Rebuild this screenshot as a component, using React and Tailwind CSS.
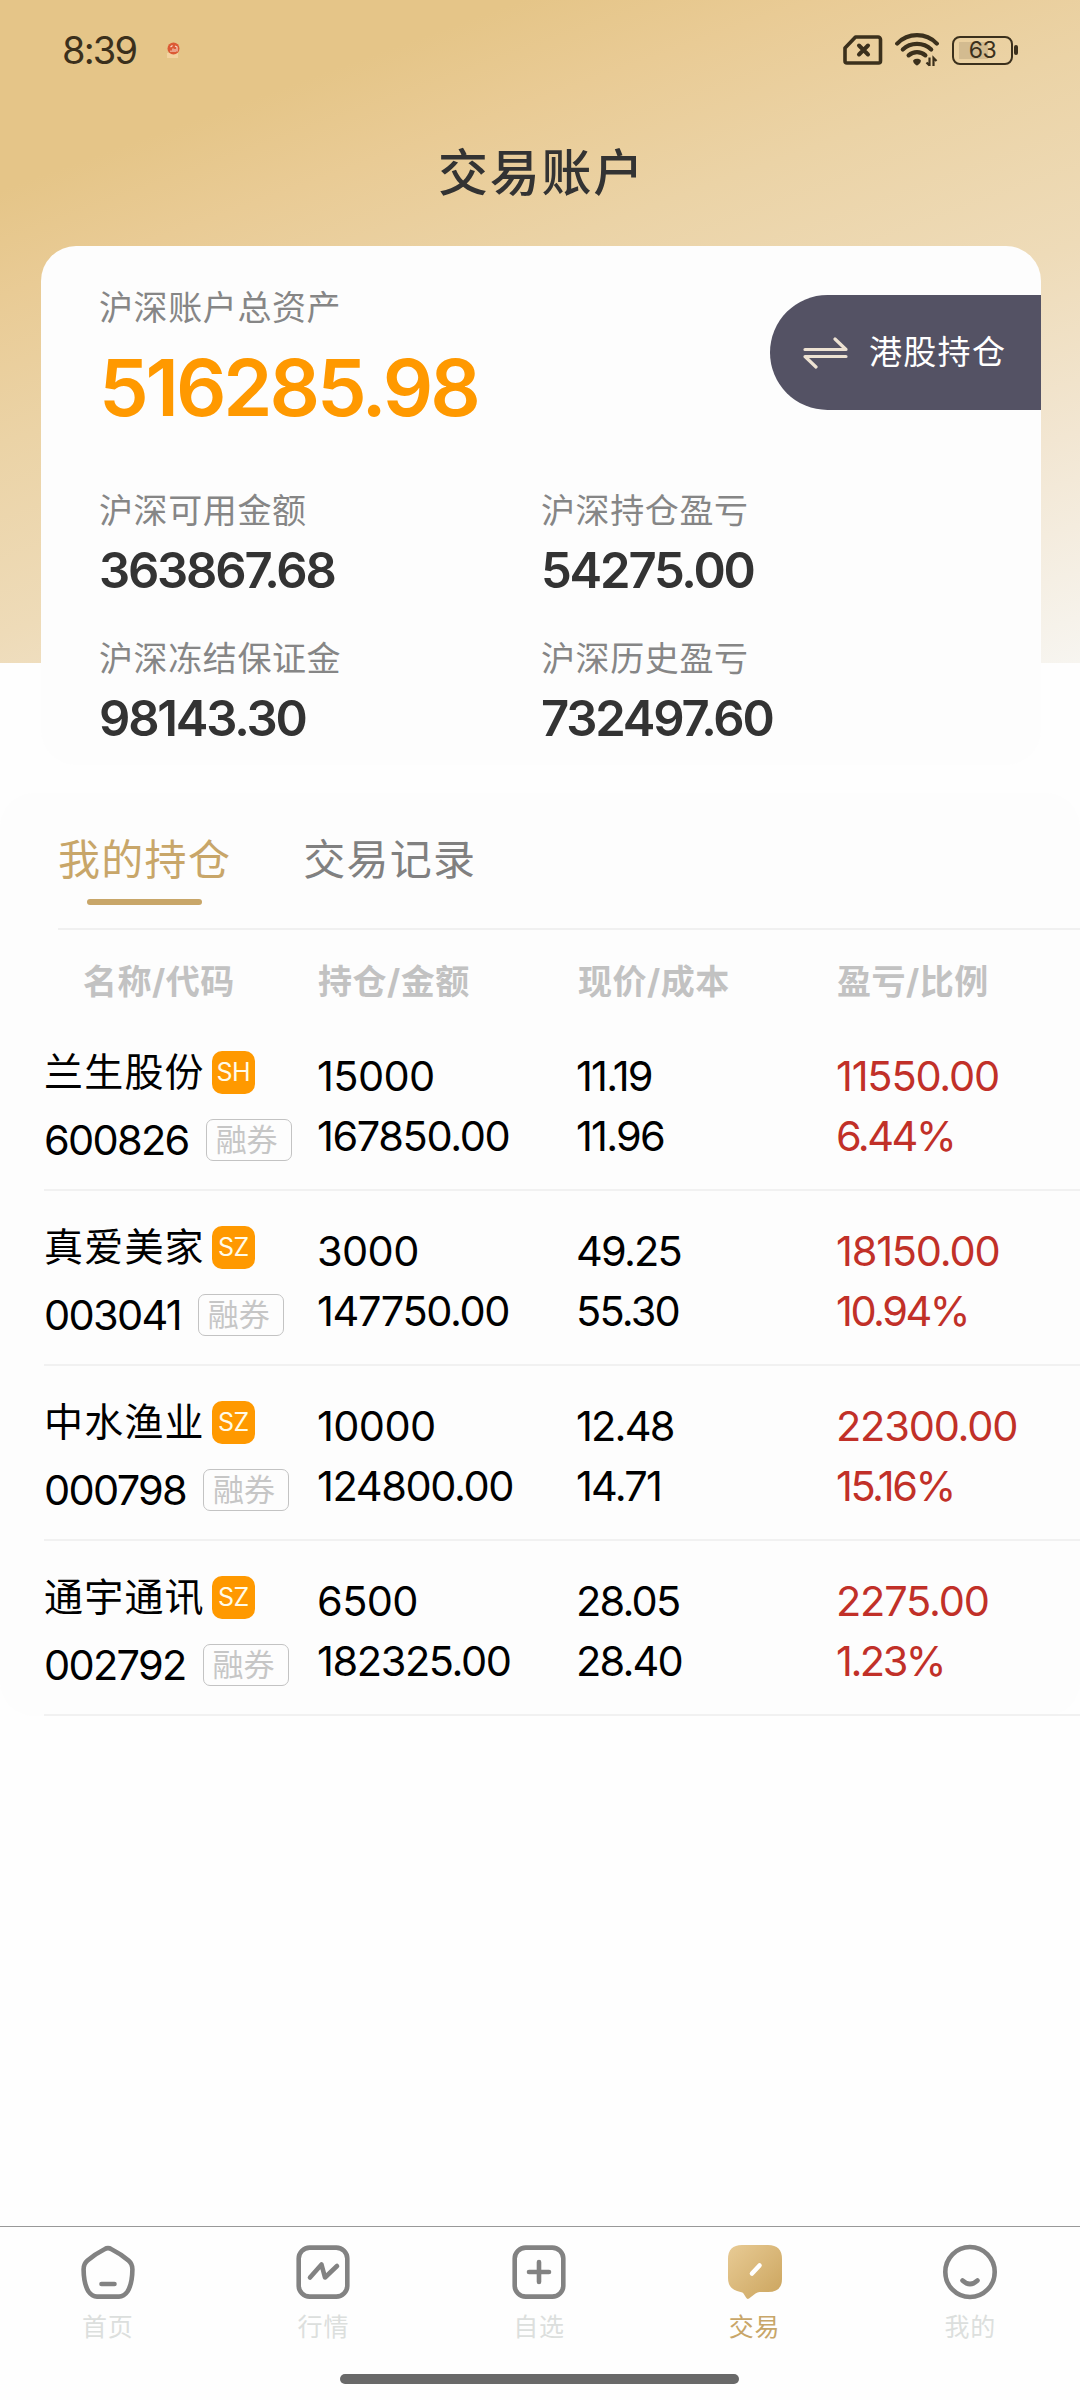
import { useState } from "react";

const balances = [
  { label: "沪深可用金额", value: "363867.68" },
  { label: "沪深持仓盈亏", value: "54275.00" },
  { label: "沪深冻结保证金", value: "98143.30" },
  { label: "沪深历史盈亏", value: "732497.60" },
];

const tabs = ["我的持仓", "交易记录"];

const columns = ["持仓/金额", "现价/成本", "盈亏/比例"];

const holdings = [
  {
    name: "兰生股份",
    market: "SH",
    code: "600826",
    quantity: "15000",
    amount: "167850.00",
    price: "11.19",
    cost: "11.96",
    profit: "11550.00",
    ratio: "6.44%",
  },
  {
    name: "真爱美家",
    market: "SZ",
    code: "003041",
    quantity: "3000",
    amount: "147750.00",
    price: "49.25",
    cost: "55.30",
    profit: "18150.00",
    ratio: "10.94%",
  },
  {
    name: "中水渔业",
    market: "SZ",
    code: "000798",
    quantity: "10000",
    amount: "124800.00",
    price: "12.48",
    cost: "14.71",
    profit: "22300.00",
    ratio: "15.16%",
  },
  {
    name: "通宇通讯",
    market: "SZ",
    code: "002792",
    quantity: "6500",
    amount: "182325.00",
    price: "28.05",
    cost: "28.40",
    profit: "2275.00",
    ratio: "1.23%",
  },
];

const StatusBar = () => (
  <div className="flex h-[100px] items-center pl-[62px] pr-[62px] text-[#3b301c]">
    <span className="w-[76px] text-[38px] leading-[100px] tracking-[-1.8px]">8:39</span>
    <svg width="14" height="16" viewBox="0 0 14 16" className="ml-[29px]">
      <rect x="0" y="11" width="11" height="5" fill="#f3d3a0" />
      <circle cx="6.5" cy="6.5" r="6" fill="#dc5a35" />
      <path d="M3.5 5l2-1.5M4 8.5V10M6 6.5v3.5M8 4l2 1v4.5M8 7v3" stroke="#f8ddcc" strokeWidth="1.1" fill="none" />
    </svg>
    <svg width="40" height="30" viewBox="0 0 40 30" className="ml-auto" fill="none" stroke="currentColor">
      <path
        d="M12.5 2H35a2.5 2.5 0 0 1 2.5 2.5V26a2 2 0 0 1-2 2H4a2 2 0 0 1-2-2V13z"
        strokeWidth="3.6"
        strokeLinejoin="round"
      />
      <path d="M16 10.5l9 9M25 10.5l-9 9" strokeWidth="4" strokeLinecap="round" />
    </svg>
    <svg width="44" height="34" viewBox="0 0 44 34" className="ml-[12px]" fill="none" stroke="currentColor">
      <path d="M2.2 10.6C13 -0.6 31 -0.6 41.8 10.6" strokeWidth="4.2" strokeLinecap="round" />
      <path d="M7.8 16.6C15.5 9 28.5 9 36.2 16.6" strokeWidth="4.2" strokeLinecap="round" />
      <path d="M13.6 22.3C18.5 18 25.5 18 30.4 22.3" strokeWidth="4.2" strokeLinecap="round" />
      <path d="M18.2 27.2c2.2-1.8 5.4-1.8 7.6 0 .4 2.2-2 4.6-3.8 5.2-1.8-.6-4.2-3-3.8-5.2z" fill="currentColor" stroke="none" />
      <path d="M34.5 24.5V33M31.500 29.5l3 3M38.5 33v-8l3 3" strokeWidth="2.2" />
    </svg>
    <div className="ml-[13px] flex h-[29px] w-[61px] items-center justify-center rounded-[8px] border-[2.5px] border-[#3b301c] bg-[linear-gradient(#d3bb90,#d3bb90)] bg-[length:29px_17px] bg-[position:5px_4px] bg-no-repeat text-[23px] leading-none tracking-[-0.5px]">
      63
    </div>
    <div className="ml-[1px] h-[10px] w-[4px] rounded-[2px] bg-[#3b301c]" />
  </div>
);

const AccountCard = () => (
  <div className="ml-[41px] h-[519px] w-[1000px] rounded-[35px] bg-[#fdfdfd] pt-[41px]">
    <div className="flex h-[178px] justify-between pl-[58px]">
      <div>
        <p className="text-[34px] leading-[42px] tracking-[0.6px] text-[#868686]">
          沪深账户总资产
        </p>
        <p className="text-[79px] leading-[117px] font-semibold tracking-[-3.1px] text-[#ff9900]">
          516285.98
        </p>
      </div>
      <button className="mt-[8px] flex h-[115px] w-[271px] items-center rounded-l-full bg-[#545264] pl-[33px] text-[33px] tracking-[1.3px] text-white">
        <svg
          width="45"
          height="32"
          viewBox="0 0 45 32"
          className="mr-[21px]"
          fill="none"
          stroke="#ede2d2"
          strokeWidth="3.2"
          strokeLinecap="round"
          strokeLinejoin="round"
        >
          <path d="M2 12.5h41L32 2M43 19.5H2L13 30" />
        </svg>
        港股持仓
      </button>
    </div>
    <div className="mt-[24px] grid grid-cols-[442px_1fr] gap-y-[29px] pl-[58px]">
      {balances.map((item) => (
        <div key={item.label}>
          <p className="text-[34px] leading-[44px] tracking-[0.6px] text-[#868686]">
            {item.label}
          </p>
          <p className="text-[49px] leading-[75px] font-semibold tracking-[-2.2px] text-[#333333]">
            {item.value}
          </p>
        </div>
      ))}
    </div>
  </div>
);

const HoldingRow = ({ stock }) => (
  <div className="ml-[44px] grid h-[175px] grid-cols-[273px_259px_260px_1fr] border-b-2 border-[#f1f1f1] text-[41.5px] leading-[60px] text-black">
    <div className="pt-[34px]">
      <div className="flex h-[44px] items-center">
        <span className="text-[39px] tracking-[1.2px]">{stock.name}</span>
        <span className="ml-[7px] flex h-[43px] w-[43px] items-center justify-center rounded-[10px] bg-[#ff9900] text-[25px] leading-none tracking-[-0.5px] text-[#fffbe8]">
          {stock.market}
        </span>
      </div>
      <div className="mt-[24px] flex h-[43px] items-center">
        <span className="tracking-[-1.7px]">{stock.code}</span>
        <span className="ml-[17px] h-[42px] w-[86px] rounded-[7px] border border-[#c3c3c3] pl-[9px] text-[31px] leading-[40px] text-[#c6c6c6]">
          融券
        </span>
      </div>
    </div>
    <div className="pt-[30px]">
      <p className="tracking-[-0.6px]">{stock.quantity}</p>
      <p className="tracking-[-1.4px]">{stock.amount}</p>
    </div>
    <div className="pt-[30px] tracking-[-1.8px]">
      <p>{stock.price}</p>
      <p>{stock.cost}</p>
    </div>
    <div className="pt-[30px] text-[#c13028]">
      <p className="tracking-[-1.2px]">{stock.profit}</p>
      <p className="tracking-[-2.5px]">{stock.ratio}</p>
    </div>
  </div>
);

const Holdings = () => {
  const [activeTab, setActiveTab] = useState(0);
  return (
    <section className="mt-[28px] h-[923px] rounded-[34px] bg-[#fdfdfd]">
      <div className="ml-[58px] flex h-[137px] gap-[72px] border-b-2 border-[#f0f0f0] pt-[37px]">
        {tabs.map((tab, index) => (
          <button
            key={tab}
            onClick={() => setActiveTab(index)}
            className={`flex flex-col items-center self-start text-[42px] leading-[60px] tracking-[1.3px] ${
              activeTab === index ? "text-[#c8a669]" : "text-[#808080]"
            }`}
          >
            {tab}
            {activeTab === index && (
              <span className="mt-[9px] h-[6px] w-[115px] rounded-full bg-[#c8a669]" />
            )}
          </button>
        ))}
      </div>
      <div className="ml-[45px] grid h-[86px] grid-cols-[273px_260px_259px_1fr] text-[34px] leading-[104px] font-bold tracking-[0.5px] text-[#c2c2c2]">
        <span className="pl-[38px]">名称/代码</span>
        {columns.map((column) => (
          <span key={column}>{column}</span>
        ))}
      </div>
      {holdings.map((stock) => (
        <HoldingRow key={stock.code} stock={stock} />
      ))}
    </section>
  );
};

const HomeIcon = () => (
  <>
    <path d="M23.5 4.2a7 7 0 0 1 7 0C37 7.5 43 11.5 47.5 15.5q4 3.5 3.9 9C51.3 33 50 41 46.5 46.5Q43 51.6 38 51.6H16Q11 51.6 7.5 46.5C4 41 2.7 33 2.6 24.5q-.1-5.5 3.9-9C11 11.5 17 7.5 23.5 4.2z" />
    <path d="M20.5 39H33.5" />
  </>
);

const MarketIcon = () => (
  <>
    <rect x="2.7" y="2.6" width="48.6" height="49" rx="11" />
    <path d="M14 32.5L25.5 19.5L29 32.5L41 21" />
  </>
);

const WatchIcon = () => (
  <>
    <rect x="2.7" y="2.6" width="48.6" height="49" rx="11" />
    <path d="M17 27H37M27 17V37" />
  </>
);

const TradeIcon = () => (
  <>
    <defs>
      <linearGradient id="trade" x1="0" y1="0" x2="1" y2="1">
        <stop offset="0" stopColor="#e8cb95" />
        <stop offset="1" stopColor="#cba45d" />
      </linearGradient>
    </defs>
    <path
      d="M14 0H40Q54 0 54 14V34Q54 47 40 47H31.5Q29.5 47 27.5 48.5L21 53.5Q19.3 54.8 18 52.5L15.5 48.5Q14.8 47.3 12.5 46.9Q0 45 0 33V14Q0 0 14 0z"
      fill="url(#trade)"
      stroke="none"
    />
    <path d="M24 28.5L31.5 20.5" stroke="#fff" />
  </>
);

const MineIcon = () => (
  <>
    <ellipse cx="27" cy="27" rx="24.7" ry="25" />
    <path d="M19.5 35.5Q27 42.5 34.5 35.5" />
  </>
);

const navItems = [
  { label: "首页", icon: HomeIcon },
  { label: "行情", icon: MarketIcon },
  { label: "自选", icon: WatchIcon },
  { label: "交易", icon: TradeIcon, active: true },
  { label: "我的", icon: MineIcon },
];

const BottomNav = () => (
  <nav className="mt-auto h-[174px] border-t border-[#999999] bg-[#fefefe]">
    <div className="grid h-[147px] grid-cols-5 pt-[18px] pr-[2px]">
      {navItems.map(({ label, icon: Icon, active }) => (
        <div
          key={label}
          className={`flex flex-col items-center text-[25px] leading-[30px] tracking-[0.8px] ${
            active ? "text-[#c8a669]" : "text-[#dcdfdd]"
          }`}
        >
          <svg
            width="54"
            height="54"
            viewBox="0 0 54 54"
            className="mb-[13px] overflow-visible"
            fill="none"
            stroke="#828282"
            strokeWidth="4.6"
            strokeLinecap="round"
            strokeLinejoin="round"
          >
            <Icon />
          </svg>
          {label}
        </div>
      ))}
    </div>
    <div className="ml-[340px] h-[10px] w-[399px] rounded-full bg-[#696969]" />
  </nav>
);

const App = () => (
  <div className="flex h-[2400px] w-[1080px] flex-col overflow-hidden bg-[#fefefe] bg-[linear-gradient(160deg,#e5c588_0%,#e5c588_18%,#e9cb95_28%,#ebd3a6_42%,#eedbb8_60%,#f2e6d2_78%,#f7f5f0_100%)] bg-[length:100%_663px] bg-no-repeat font-['Inter','Noto_Sans_CJK_SC',sans-serif]">
    <StatusBar />
    <h1 className="h-[146px] pl-[3px] text-center text-[50px] leading-[147px] font-medium tracking-[1.8px] text-[#333333]">
      交易账户
    </h1>
    <AccountCard />
    <Holdings />
    <BottomNav />
  </div>
);

export default App;
